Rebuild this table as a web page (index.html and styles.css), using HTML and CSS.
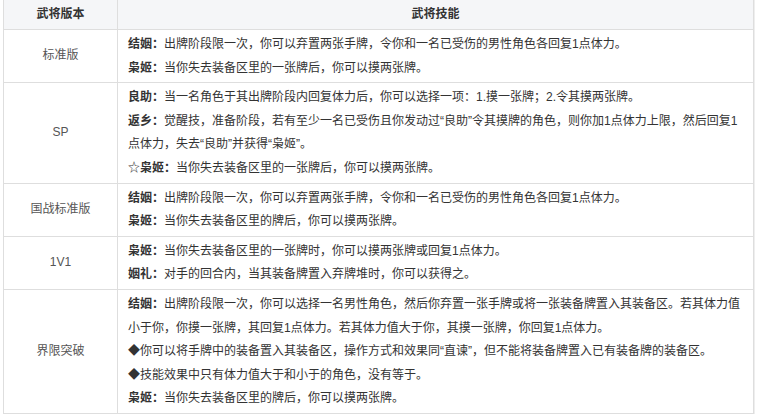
FILE: index.html
```html
<!DOCTYPE html>
<html lang="zh-CN">
<head>
<meta charset="utf-8">
<title>武将技能</title>
<link rel="stylesheet" href="styles.css">
</head>
<body>
<div class="wrap">
<table class="skills">
  <colgroup><col class="c1"><col class="c2"></colgroup>
  <thead>
    <tr><th>武将版本</th><th>武将技能</th></tr>
  </thead>
  <tbody>
    <tr>
      <td class="ver">标准版</td>
      <td class="sk"><b>结姻：</b>出牌阶段限一次，你可以弃置两张手牌，令你和一名已受伤的男性角色各回复1点体力。<br><b>枭姬：</b>当你失去装备区里的一张牌后，你可以摸两张牌。</td>
    </tr>
    <tr>
      <td class="ver">SP</td>
      <td class="sk"><b>良助：</b>当一名角色于其出牌阶段内回复体力后，你可以选择一项：1.摸一张牌；2.令其摸两张牌。<br><b>返乡：</b>觉醒技，准备阶段，若有至少一名已受伤且你发动过“良助”令其摸牌的角色，则你加1点体力上限，然后回复1<br>点体力，失去“良助”并获得“枭姬”。<br>☆<b>枭姬：</b>当你失去装备区里的一张牌后，你可以摸两张牌。</td>
    </tr>
    <tr>
      <td class="ver">国战标准版</td>
      <td class="sk"><b>结姻：</b>出牌阶段限一次，你可以弃置两张手牌，令你和一名已受伤的男性角色各回复1点体力。<br><b>枭姬：</b>当你失去装备区里的牌后，你可以摸两张牌。</td>
    </tr>
    <tr>
      <td class="ver">1V1</td>
      <td class="sk"><b>枭姬：</b>当你失去装备区里的一张牌时，你可以摸两张牌或回复1点体力。<br><b>姻礼：</b>对手的回合内，当其装备牌置入弃牌堆时，你可以获得之。</td>
    </tr>
    <tr>
      <td class="ver">界限突破</td>
      <td class="sk"><b>结姻：</b>出牌阶段限一次，你可以选择一名男性角色，然后你弃置一张手牌或将一张装备牌置入其装备区。若其体力值<br>小于你，你摸一张牌，其回复1点体力。若其体力值大于你，其摸一张牌，你回复1点体力。<br>◆你可以将手牌中的装备置入其装备区，操作方式和效果同“直谏”，但不能将装备牌置入已有装备牌的装备区。<br>◆技能效果中只有体力值大于和小于的角色，没有等于。<br><b>枭姬：</b>当你失去装备区里的牌后，你可以摸两张牌。</td>
    </tr>
  </tbody>
</table>
</div>
</body>
</html>
```
FILE: styles.css
```css
html, body {
  margin: 0;
  padding: 0;
  background: #ffffff;
}
.wrap {
  padding: 0 4px 0 3px;
}
.skills {
  width: 751px;
  border-collapse: collapse;
  margin-top: -1px;
  font-family: "Liberation Sans", "Noto Sans CJK SC", sans-serif;
  font-size: 12px;
  color: #333333;
  box-shadow: 1px 0 0 #eeeeee;
}
.c1 { width: 114px; }
.skills th, .skills td {
  border: 1px solid #dedede;
}
.skills th {
  background: #f5f6f8;
  font-weight: bold;
  height: 29px;
  padding: 0;
  line-height: 29px;
  text-align: center;
  color: #333333;
}
.skills td {
  line-height: 23.6px;
  padding: 3px 10px 2px 10px;
  vertical-align: middle;
}
.skills td.ver {
  text-align: center;
  color: #555555;
  padding: 0;
}
.skills td.sk {
  white-space: nowrap;
}
.skills td.sk b {
  font-weight: bold;
  color: #333333;
}
```
